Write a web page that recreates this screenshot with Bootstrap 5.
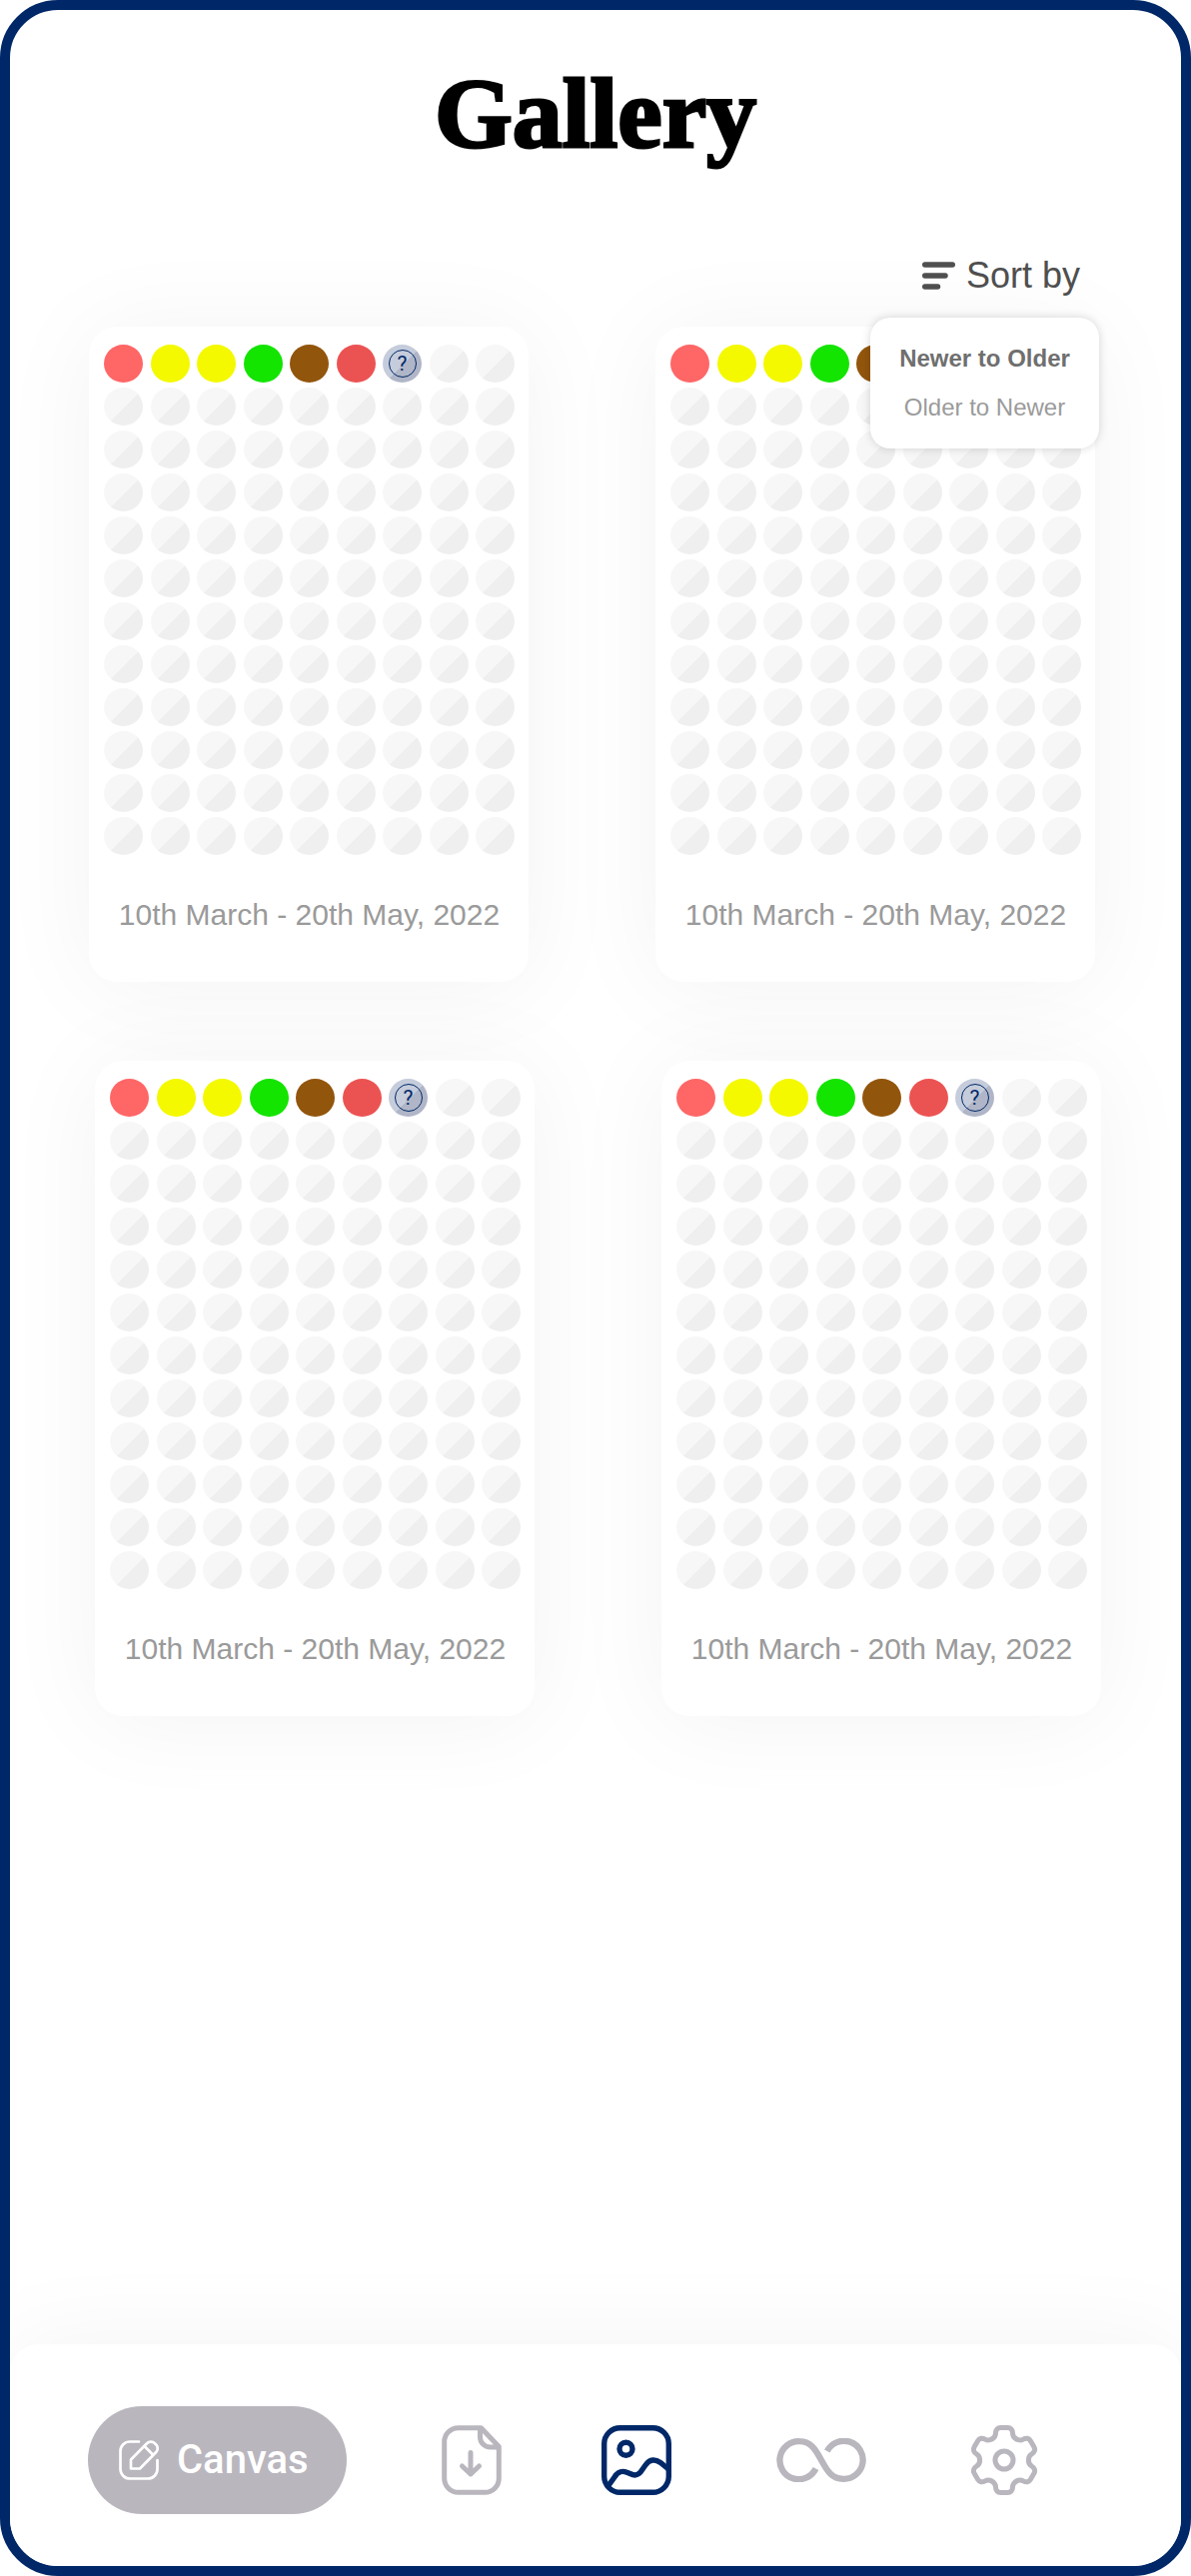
<!DOCTYPE html>
<html lang="en">
<head>
<meta charset="utf-8">
<meta name="viewport" content="width=device-width, initial-scale=1">
<title>Gallery</title>
<link href="https://cdn.jsdelivr.net/npm/bootstrap@5.3.0/dist/css/bootstrap.min.css" rel="stylesheet">
<style>
  :root { --navy: #002868; --muted: #b9b6be; }
  body { font-family: "Liberation Sans", Arial, sans-serif; background: #fff; }
  .app-frame { border: 10px solid var(--navy); border-radius: 58px; overflow: hidden; background: #fff; }
  .page-title { font: 700 100px/100px "Liberation Serif", "Times New Roman", serif; color: #000; padding-top: 54px; -webkit-text-stroke: 3px #000; }
  .sort-bar { padding: 92px 101px 31px 0; }
  .sort-toggle { font-size: 36px; line-height: 40px; color: #4f4f4f; gap: 11px; }
  .sort-menu { top: 62px; right: -19px; width: 229px; padding: 27px 0; gap: 21px; border: 0; border-radius: 20px; box-shadow: 0 0 10px rgba(0,0,0,.16); }
  .sort-menu .dropdown-item { font-size: 24px; line-height: 28px; padding: 0; text-align: center; color: #9b9b9b; }
  .sort-menu .dropdown-item.active { font-weight: 700; color: #6f6f6f; background: none; }
  .shelf { display: grid; grid-template-columns: 1fr 1fr; column-gap: 127px; padding: 0 86px 79px 79px; }
  .shelf + .shelf { padding-left: 85px; padding-right: 80px; }
  .tile { display: block; background: #fff; border-radius: 28px; padding: 18px 14px 49px 15px; box-shadow: 0 4px 100px rgba(0,0,0,.05); color: #9a9a9a; text-decoration: none; }
  .dots { display: grid; grid-template-columns: repeat(9, 39px); justify-content: space-between; row-gap: 5px; }
  .dot { height: 38px; border-radius: 50%; background: linear-gradient(135deg, #f7f7f7 53%, #efefef 53%); }
  .dot.today { display: flex; align-items: center; justify-content: center; background: linear-gradient(135deg, #c5ccdb 53%, #b0b6c7 53%); }
  .today span { width: 28px; height: 28px; border: 1px solid var(--navy); border-radius: 50%; font: 400 21px/26px Roboto, sans-serif; color: var(--navy); text-align: center; }
  .coral { background: #ff6666; } .yellow { background: #f4f900; } .green { background: #13e400; }
  .brown { background: #92550c; } .red { background: #eb5352; }
  .period { font-size: 30px; line-height: 36px; margin-top: 42px; white-space: nowrap; }
  .tabs { background: #fff; border-radius: 28px 28px 0 0; padding: 62px 139px 52px 78px; box-shadow: 0 0 100px rgba(0,0,0,.05); }
  .tabs a { color: var(--muted); line-height: 0; }
  .tabs a.current { color: var(--navy); }
  .tabs svg, .sort-toggle svg { fill: none; stroke: currentColor; }
  .tabs .canvas-btn { width: 259px; height: 108px; border: 0; padding: 0 0 0 31px; gap: 18px; background: var(--muted); color: #fff; font: 500 40px/48px Roboto, sans-serif; }
</style>
</head>
<body>
<div class="app-frame min-vh-100 d-flex flex-column">
  <header>
    <h1 class="page-title text-center m-0">Gallery</h1>
  </header>

  <main class="flex-grow-1">
    <div class="sort-bar d-flex justify-content-end">
      <div class="dropdown position-relative">
        <button type="button" class="sort-toggle btn p-0 border-0 d-flex align-items-center" aria-expanded="true">
          <svg width="33" height="28" viewBox="0 0 33 28" stroke-width="5.500" stroke-linecap="round" aria-hidden="true"><path d="M2.750 3H30.250M2.750 14H23M2.750 25H15.500"/></svg>
          Sort by
        </button>
        <div class="sort-menu dropdown-menu show d-flex flex-column">
          <button type="button" class="dropdown-item active">Newer to Older</button>
          <button type="button" class="dropdown-item">Older to Newer</button>
        </div>
      </div>
    </div>

    <section class="shelf">
      <a class="tile" href="#"><div class="dots"></div><div class="period text-center">10th March - 20th May, 2022</div></a>
      <a class="tile" href="#"><div class="dots"></div><div class="period text-center">10th March - 20th May, 2022</div></a>
    </section>
    <section class="shelf">
      <a class="tile" href="#"><div class="dots"></div><div class="period text-center">10th March - 20th May, 2022</div></a>
      <a class="tile" href="#"><div class="dots"></div><div class="period text-center">10th March - 20th May, 2022</div></a>
    </section>
  </main>

  <nav class="tabs d-flex align-items-center justify-content-between" aria-label="Main">
    <button type="button" class="canvas-btn rounded-pill d-flex align-items-center">
      <svg width="40" height="40" viewBox="0 0 40 40" stroke-width="2.700" stroke-linecap="round" stroke-linejoin="round" aria-hidden="true">
        <path d="M20 1.500H11A9.500 9.500 0 0 0 1.500 11V29A9.500 9.500 0 0 0 11 38.500H29A9.500 9.500 0 0 0 38.500 29V20"/>
        <path d="M12 28.500V19.500L28 3.300a5.500 5.500 0 0 1 8 0l1 1a5.500 5.500 0 0 1 0 8L21 28.500ZM25.500 6L34 14.500"/>
      </svg>
      Canvas
    </button>
    <a href="#" aria-label="Download">
      <svg width="60" height="70" viewBox="0 0 60 70" stroke-width="5" stroke-linejoin="round" aria-hidden="true">
        <path d="M39.500 2.700H17A14 14 0 0 0 2.700 17V53A14 14 0 0 0 17 67.300H43A14 14 0 0 0 57.300 53V21.500ZM38.500 3V12a10 10 0 0 0 10 10H57"/>
        <path d="M29 27.500V49M20.500 41L29 49L37.500 41" stroke-linecap="round"/>
      </svg>
    </a>
    <a href="#" class="current" aria-label="Gallery" aria-current="page">
      <svg width="80" height="70" viewBox="-5 0 80 70" stroke-width="5.400" aria-hidden="true">
        <rect x="2.700" y="2.700" width="64.600" height="64.600" rx="16"/>
        <circle cx="24.500" cy="23.700" r="6.500"/>
        <path d="M7 60.500L13 52C17 45.500 21 45.500 26 47.500C31 49.500 34.500 52 39 47L44 40C48.500 33.500 54 34 59 37.500L67 44"/>
      </svg>
    </a>
    <a href="#" aria-label="Endless">
      <svg width="100" height="44" viewBox="-6 0 100 44" stroke-width="6.300" aria-hidden="true">
        <path d="M38.500 30.500A19 19 0 1 1 22 3.200C33.500 3.200 38 11 44 22S54.500 40.800 66 40.800A19 19 0 1 0 49.800 13"/>
      </svg>
    </a>
    <a href="#" aria-label="Settings">
      <svg width="76" height="70" viewBox="-38 -35 76 70" stroke-width="5" stroke-linecap="round" aria-hidden="true">
        <defs><path id="cog" d="M-12.200 -21.100C-9.800 -22.500 -8.500 -24 -8.500 -27C-8.500 -30.500 -6.500 -32.500 -3.500 -32.500H3.500C6.500 -32.500 8.500 -30.500 8.500 -27C8.500 -24 9.800 -22.500 12.200 -21.100"/></defs>
        <use href="#cog"/><use href="#cog" transform="rotate(60)"/><use href="#cog" transform="rotate(120)"/>
        <use href="#cog" transform="rotate(180)"/><use href="#cog" transform="rotate(240)"/><use href="#cog" transform="rotate(300)"/>
        <circle r="9"/>
      </svg>
    </a>
  </nav>
</div>
<script src="https://cdn.jsdelivr.net/npm/bootstrap@5.3.0/dist/js/bootstrap.bundle.min.js"></script>
<script>
  // Each tile is a 9 x 12 sheet of days: recorded moods, today's mark, then empty days.
  const moods = ['coral', 'yellow', 'yellow', 'green', 'brown', 'red', 'today'];
  document.querySelectorAll('.dots').forEach((sheet, index) => {
    for (let day = 0; day < 108; day++) {
      const dot = document.createElement('div');
      dot.className = 'dot ' + (moods[day] || '');
      // The open sort menu lies over today's mark on the second tile.
      if (moods[day] === 'today' && index !== 1) dot.innerHTML = '<span>?</span>';
      sheet.append(dot);
    }
  });
</script>
</body>
</html>
